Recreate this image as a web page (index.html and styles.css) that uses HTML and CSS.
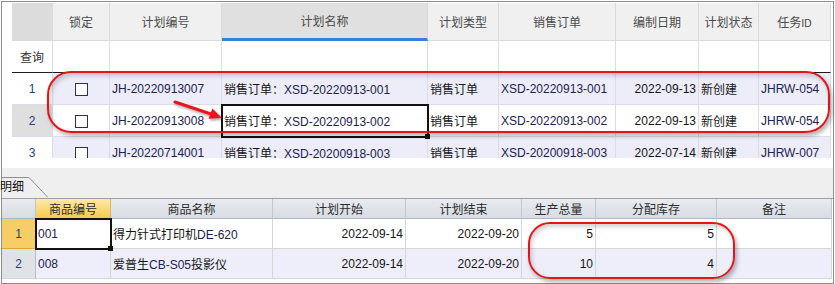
FILE: index.html
```html
<!DOCTYPE html>
<html lang="zh-CN">
<head>
    <meta charset="UTF-8">
    <title>生产计划</title>
    <link rel="stylesheet" href="styles.css">
</head>
<body>
    <div class="window">
        <section class="plan-panel">
            <div class="plan-scroll">
                <table class="grid plan-grid">
                    <colgroup>
                        <col style="width:41px"><col style="width:57px"><col style="width:112px">
                        <col style="width:206px"><col style="width:71px"><col style="width:117px">
                        <col style="width:83px"><col style="width:60px"><col style="width:72px">
                    </colgroup>
                    <thead>
                        <tr>
                            <th class="corner"></th>
                            <th>锁定</th>
                            <th>计划编号</th>
                            <th class="sorted">计划名称</th>
                            <th>计划类型</th>
                            <th>销售订单</th>
                            <th>编制日期</th>
                            <th>计划状态</th>
                            <th>任务<span class="latin">ID</span></th>
                        </tr>
                    </thead>
                    <tbody>
                        <tr class="filter-row">
                            <td class="rownum">查询</td>
                            <td></td><td></td><td></td><td></td><td></td><td></td><td></td><td></td>
                        </tr>
                        <tr class="alt">
                            <td class="rownum">1</td>
                            <td class="center"><span class="check"></span></td>
                            <td class="code">JH-20220913007</td>
                            <td>销售订单：<span class="code">XSD-20220913-001</span></td>
                            <td>销售订单</td>
                            <td class="code">XSD-20220913-001</td>
                            <td class="num">2022-09-13</td>
                            <td>新创建</td>
                            <td class="code">JHRW-054</td>
                        </tr>
                        <tr class="current">
                            <td class="rownum">2</td>
                            <td class="center"><span class="check"></span></td>
                            <td class="code">JH-20220913008</td>
                            <td class="active">销售订单：<span class="code">XSD-20220913-002</span></td>
                            <td>销售订单</td>
                            <td class="code">XSD-20220913-002</td>
                            <td class="num">2022-09-13</td>
                            <td>新创建</td>
                            <td class="code">JHRW-054</td>
                        </tr>
                        <tr class="alt">
                            <td class="rownum">3</td>
                            <td class="center"><span class="check"></span></td>
                            <td class="code">JH-20220714001</td>
                            <td>销售订单：<span class="code">XSD-20200918-003</span></td>
                            <td>销售订单</td>
                            <td class="code">XSD-20200918-003</td>
                            <td class="num">2022-07-14</td>
                            <td>新创建</td>
                            <td class="code">JHRW-007</td>
                        </tr>
                    </tbody>
                </table>
            </div>
        </section>

        <div class="tab-strip">
            <div class="tab">
                <svg class="tab-edge" width="46" height="21" viewBox="0 0 46 21">
                    <polyline points="0,0.5 27,0.5 46,20.5" fill="none" stroke="#8f8f8f" stroke-width="1"/>
                </svg>
                <span class="tab-label">明细</span>
            </div>
        </div>

        <section class="detail-panel">
            <table class="grid detail-grid">
                <colgroup>
                    <col style="width:34px"><col style="width:75px"><col style="width:162px">
                    <col style="width:133px"><col style="width:116px"><col style="width:74px">
                    <col style="width:121px"><col style="width:115px">
                </colgroup>
                <thead>
                    <tr>
                        <th class="corner"></th>
                        <th class="focus-col">商品编号</th>
                        <th>商品名称</th>
                        <th>计划开始</th>
                        <th>计划结束</th>
                        <th>生产总量</th>
                        <th>分配库存</th>
                        <th>备注</th>
                    </tr>
                </thead>
                <tbody>
                    <tr class="current">
                        <td class="rownum">1</td>
                        <td class="code active">001</td>
                        <td>得力针式打印机<span class="code">DE-620</span></td>
                        <td class="num">2022-09-14</td>
                        <td class="num">2022-09-20</td>
                        <td class="num">5</td>
                        <td class="num">5</td>
                        <td></td>
                    </tr>
                    <tr class="alt">
                        <td class="rownum">2</td>
                        <td class="code">008</td>
                        <td>爱普生<span class="code">CB-S05</span>投影仪</td>
                        <td class="num">2022-09-14</td>
                        <td class="num">2022-09-20</td>
                        <td class="num">10</td>
                        <td class="num">4</td>
                        <td></td>
                    </tr>
                </tbody>
            </table>
        </section>
    </div>

    <!-- annotations drawn over the screenshot -->
    <div class="mark mark-plan"></div>
    <div class="mark mark-stock"></div>
    <svg class="arrow" width="835" height="284" viewBox="0 0 835 284">
        <line x1="175" y1="102" x2="211" y2="114" stroke="#e8161c" stroke-width="3" stroke-linecap="round"/>
        <polygon points="222,118 208.6,118.8 212.4,108.4" fill="#e8161c"/>
    </svg>
</body>
</html>
```

FILE: styles.css
```css
* {
    margin: 0;
    padding: 0;
    box-sizing: border-box;
}

body {
    position: relative;
    width: 835px;
    height: 284px;
    overflow: hidden;
    background: #ffffff;
    font-family: 'Liberation Sans', 'Noto Sans CJK SC', sans-serif;
    font-size: 12px;
    color: #151515;
}

.window {
    margin: 1px 0 0 1px;
    width: 833px;
    height: 283px;
    border: 1px solid #8c8c8c;
    display: flex;
    flex-direction: column;
    background: #f0f0f0;
}

/* ---------- top grid ---------- */

.plan-panel {
    flex: none;
    height: 166px;
    padding: 1px 0 0 10px;
    background: #ffffff;
}

.plan-scroll {
    height: 155px;
    overflow: hidden;
}

.grid {
    border-collapse: separate;
    border-spacing: 0;
    table-layout: fixed;
}

.grid th,
.grid td {
    padding: 0 2px;
    white-space: nowrap;
    overflow: hidden;
    font-weight: normal;
}

.plan-grid {
    width: 819px;
}

.plan-grid th,
.plan-grid td {
    border-right: 1px solid #dadada;
    border-bottom: 1px solid #dadada;
}

.plan-grid thead tr {
    height: 38px;
}

.plan-grid th {
    background: #f0f0f0;
    color: #4a4a4a;
    text-align: center;
    font-size: 12px;
}

.plan-grid th.corner {
    background: #dcdcdc;
}

.plan-grid th.sorted {
    background: #e0e0e0;
    border-bottom: 3px solid #3b7fd4;
}

.latin {
    font-family: 'DejaVu Sans', sans-serif;
    font-size: 10px;
}

.plan-grid tbody tr {
    height: 32px;
}

.plan-grid .filter-row td {
    background: #ffffff;
    border-bottom: 1px solid #1c1c1c;
}

.plan-grid .filter-row .rownum {
    color: #333333;
}

.plan-grid tbody td {
    border-right-color: #dcdce4;
    border-bottom-color: #dcdce4;
}

.plan-grid .alt td {
    background: #ededfa;
}

.plan-grid .rownum {
    text-align: center;
    color: #26407e;
    background: #ffffff !important;
}

.plan-grid .current .rownum {
    background: #dfdfdf !important;
}

.code {
    color: #1b2350;
}

.center {
    text-align: center;
}

.num {
    text-align: right;
}

.check {
    display: inline-block;
    width: 13px;
    height: 13px;
    border: 1px solid #333333;
    background: #ffffff;
    vertical-align: middle;
}

.active {
    position: relative;
    overflow: visible !important;
    outline: 2px solid #121212;
    outline-offset: -1px;
}

.active::after {
    content: '';
    position: absolute;
    right: -3px;
    bottom: -3px;
    width: 5px;
    height: 5px;
    background: #121212;
}

/* ---------- tab strip ---------- */

.tab-strip {
    flex: none;
    height: 31px;
    display: flex;
    align-items: flex-end;
    background: #efefef;
    border-bottom: 1px solid #a0a0a0;
}

.tab {
    position: relative;
    width: 46px;
    height: 21px;
}

.tab-edge {
    position: absolute;
    left: 0;
    top: 0;
}

.tab-label {
    position: relative;
    display: block;
    margin-left: -2px;
    line-height: 21px;
    font-size: 12px;
    color: #111111;
}

/* ---------- detail grid ---------- */

.detail-panel {
    flex: 1;
    background: #ffffff;
}

.detail-grid {
    width: 830px;
}

.detail-grid thead tr {
    height: 20px;
}

.detail-grid th {
    background: linear-gradient(#e8ebef, #d8dde3);
    border-right: 1px solid #c3c8cf;
    border-bottom: 1px solid #b3b9c1;
    color: #2c2c2c;
    text-align: center;
}

.detail-grid th.focus-col {
    background: linear-gradient(#feeaa6, #f7ca50);
    border-right-color: #d8b45a;
}

.detail-grid tbody tr {
    height: 30px;
}

.detail-grid td {
    border-right: 1px solid #d6d6d6;
    border-bottom: 1px solid #d6d6d6;
    background: #ffffff;
}

.detail-grid .alt td {
    background: #eeeefb;
}

.detail-grid .rownum {
    text-align: center;
    color: #26407e;
    background: #dfe3e8 !important;
    border-right-color: #b8bec6;
}

.detail-grid .current .rownum {
    background: #f6cd66 !important;
    border-right-color: #d9a93c;
    border-bottom-color: #d9a93c;
}

/* ---------- red annotations ---------- */

.mark {
    position: absolute;
    border: 2px solid #e3151b;
    box-shadow: 2px 3px 4px rgba(0, 0, 0, 0.3), inset 2px 3px 4px rgba(0, 0, 0, 0.18);
    pointer-events: none;
}

.mark-plan {
    left: 47px;
    top: 71px;
    width: 783px;
    height: 62px;
    border-radius: 24px;
}

.mark-stock {
    left: 528px;
    top: 222px;
    width: 207px;
    height: 57px;
    border-radius: 22px;
}

.arrow {
    position: absolute;
    left: 0;
    top: 0;
    pointer-events: none;
    filter: drop-shadow(1px 2px 1px rgba(0, 0, 0, 0.3));
}
```
